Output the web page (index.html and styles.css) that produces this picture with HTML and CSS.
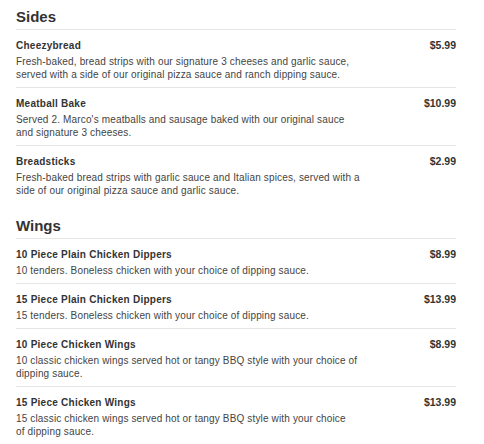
FILE: index.html
```html
<!DOCTYPE html>
<html>
<head>
<meta charset="utf-8">
<link rel="stylesheet" href="styles.css">
</head>
<body>
<div class="menu">
  <section class="category">
    <h2 class="cat-title">Sides</h2>
    <div class="item">
      <div class="item-main">
        <div class="item-name">Cheezybread</div>
        <div class="item-desc">Fresh-baked, bread strips with our signature 3 cheeses and garlic sauce,<br>served with a side of our original pizza sauce and ranch dipping sauce.</div>
      </div>
      <div class="item-price">$5.99</div>
    </div>
    <div class="item">
      <div class="item-main">
        <div class="item-name">Meatball Bake</div>
        <div class="item-desc">Served 2. Marco's meatballs and sausage baked with our original sauce<br>and signature 3 cheeses.</div>
      </div>
      <div class="item-price">$10.99</div>
    </div>
    <div class="item last">
      <div class="item-main">
        <div class="item-name">Breadsticks</div>
        <div class="item-desc">Fresh-baked bread strips with garlic sauce and Italian spices, served with a<br>side of our original pizza sauce and garlic sauce.</div>
      </div>
      <div class="item-price">$2.99</div>
    </div>
  </section>
  <section class="category">
    <h2 class="cat-title">Wings</h2>
    <div class="item">
      <div class="item-main">
        <div class="item-name">10 Piece Plain Chicken Dippers</div>
        <div class="item-desc">10 tenders. Boneless chicken with your choice of dipping sauce.</div>
      </div>
      <div class="item-price">$8.99</div>
    </div>
    <div class="item">
      <div class="item-main">
        <div class="item-name">15 Piece Plain Chicken Dippers</div>
        <div class="item-desc">15 tenders. Boneless chicken with your choice of dipping sauce.</div>
      </div>
      <div class="item-price">$13.99</div>
    </div>
    <div class="item">
      <div class="item-main">
        <div class="item-name">10 Piece Chicken Wings</div>
        <div class="item-desc">10 classic chicken wings served hot or tangy BBQ style with your choice of<br>dipping sauce.</div>
      </div>
      <div class="item-price">$8.99</div>
    </div>
    <div class="item last">
      <div class="item-main">
        <div class="item-name">15 Piece Chicken Wings</div>
        <div class="item-desc">15 classic chicken wings served hot or tangy BBQ style with your choice<br>of dipping sauce.</div>
      </div>
      <div class="item-price">$13.99</div>
    </div>
  </section>
</div>
</body>
</html>
```
FILE: styles.css
```css
* { box-sizing: border-box; }
html, body { margin: 0; padding: 0; background: #fff; }
body {
  font-family: "Liberation Sans", Arial, sans-serif;
  color: #333;
}
.menu {
  margin-left: 16px;
  width: 440px;
  padding-top: 7px;
}
.category + .category { margin-top: 13px; }
.cat-title {
  margin: 0;
  font-size: 15px;
  font-weight: bold;
  line-height: 20px;
  color: #333;
  padding-bottom: 2px;
  border-bottom: 1px solid #e6e6e6;
}
.item {
  display: flex;
  justify-content: space-between;
  align-items: flex-start;
  border-bottom: 1px solid #e6e6e6;
  padding: 9px 0 6px;
}
.item.last { border-bottom: none; }
.item-main { flex: 1; }
.item-name {
  font-size: 10px;
  font-weight: bold;
  letter-spacing: 0.25px;
  line-height: 13px;
  color: #333;
  margin-bottom: 3px;
}
.item-desc {
  font-size: 10px;
  line-height: 13px;
  letter-spacing: 0.15px;
  color: #444;
}
.item-price {
  font-size: 10.5px;
  font-weight: bold;
  line-height: 12px;
  color: #333;
}
```
